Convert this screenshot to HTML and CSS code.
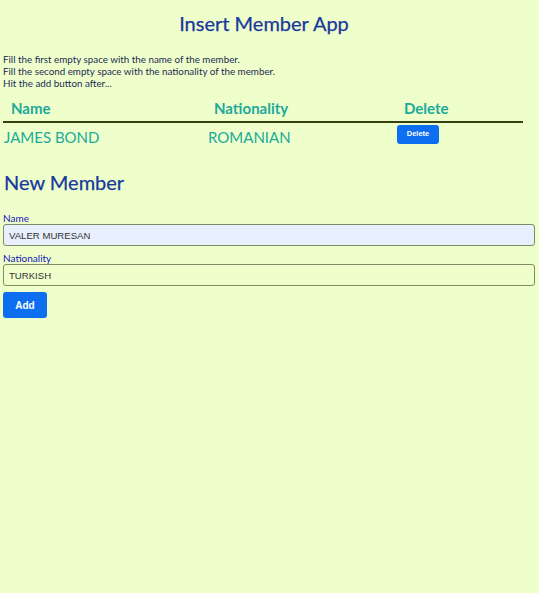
FILE: index.html
```html
<!DOCTYPE html>
<html>
<head>
<meta charset="utf-8">
<link rel="stylesheet" href="styles.css">
</head>
<body>
<div class="app">
  <h1 class="title">Insert Member App</h1>
  <p class="intro">Fill the first empty space with the name of the member.<br>Fill the second empty space with the nationality of the member.<br>Hit the add button after...</p>
  <table class="members">
    <colgroup>
      <col class="w-name">
      <col class="w-nat">
      <col class="w-del">
    </colgroup>
    <thead>
      <tr>
        <th class="col-name">Name</th>
        <th class="col-nat">Nationality</th>
        <th class="col-del">Delete</th>
      </tr>
    </thead>
    <tbody>
      <tr>
        <td class="cell-name">JAMES BOND</td>
        <td class="cell-nat">ROMANIAN</td>
        <td class="cell-del"><button class="btn btn-del">Delete</button></td>
      </tr>
    </tbody>
  </table>
  <h2 class="subtitle">New Member</h2>
  <form class="form">
    <label class="label">Name</label>
    <input class="input input-filled" type="text" value="VALER MURESAN">
    <label class="label">Nationality</label>
    <input class="input" type="text" value="TURKISH">
    <button type="button" class="btn btn-add">Add</button>
  </form>
</div>
</body>
</html>
```

FILE: styles.css
```css
html, body {
  margin: 0;
  padding: 0;
}
body {
  background: #eeffcc;
  font-family: Lato, "Open Sans", sans-serif;
  width: 539px;
  height: 593px;
}
.app {
  padding: 0 3px;
}
.title {
  margin: 0;
  padding-top: 9px;
  text-align: center;
  font-size: 20px;
  font-weight: 400;
  line-height: 28px;
  color: #17389c;
  width: 522px;
  -webkit-text-stroke: 0.25px #17389c;
}
.intro {
  margin: 16px 0 0 0;
  font-size: 9.8px;
  line-height: 12px;
  color: #232c52;
}
.members {
  border-collapse: collapse;
  table-layout: fixed;
  width: 520px;
}
.w-name { width: 205px; }
.w-nat { width: 189px; }
.w-del { width: 126px; }
.members th {
  font-size: 15px;
  font-weight: 700;
  color: #20aa9a;
  text-align: left;
  padding: 9px 0 3px 0;
  line-height: 20px;
  border-bottom: 2px solid #37400f;
}
.col-name { padding-left: 8px !important; }
.col-nat { padding-left: 6px !important; }
.col-del { padding-left: 7px !important; }
.members td {
  font-size: 15px;
  color: #20aa9a;
  padding: 4px 0 0 0;
  line-height: 20px;
  vertical-align: top;
}
.cell-name { padding-left: 1px !important; }
.cell-del { padding-top: 2px !important; }
.btn {
  font-family: "Liberation Sans", Arial, sans-serif;
  font-weight: 700;
  color: #ffffff;
  background: #0d6ef0;
  border: none;
  border-radius: 3px;
  cursor: pointer;
}
.btn-del {
  font-size: 7.5px;
  width: 42px;
  height: 19px;
  padding: 0 0 2px 0;
  display: block;
}
.subtitle {
  margin: 22px 0 0 1px;
  font-size: 20px;
  font-weight: 400;
  line-height: 26px;
  color: #17389c;
  -webkit-text-stroke: 0.25px #17389c;
}
.form {
  display: flex;
  flex-direction: column;
  align-items: flex-start;
  margin-top: 17px;
}
.label {
  font-size: 10px;
  line-height: 12px;
  color: #1515b8;
}
.input {
  box-sizing: border-box;
  width: 532px;
  height: 22px;
  margin: 0 0 6px 0;
  padding: 0 5px;
  font-family: "Liberation Sans", Arial, sans-serif;
  font-size: 9.6px;
  color: #333333;
  background: transparent;
  border: 1px solid #7f8a66;
  border-radius: 3px;
  outline: none;
}
.input-filled {
  background: #e8f0fe;
}
.btn-add {
  font-size: 10px;
  width: 44px;
  height: 26px;
  padding: 0;
}
```
